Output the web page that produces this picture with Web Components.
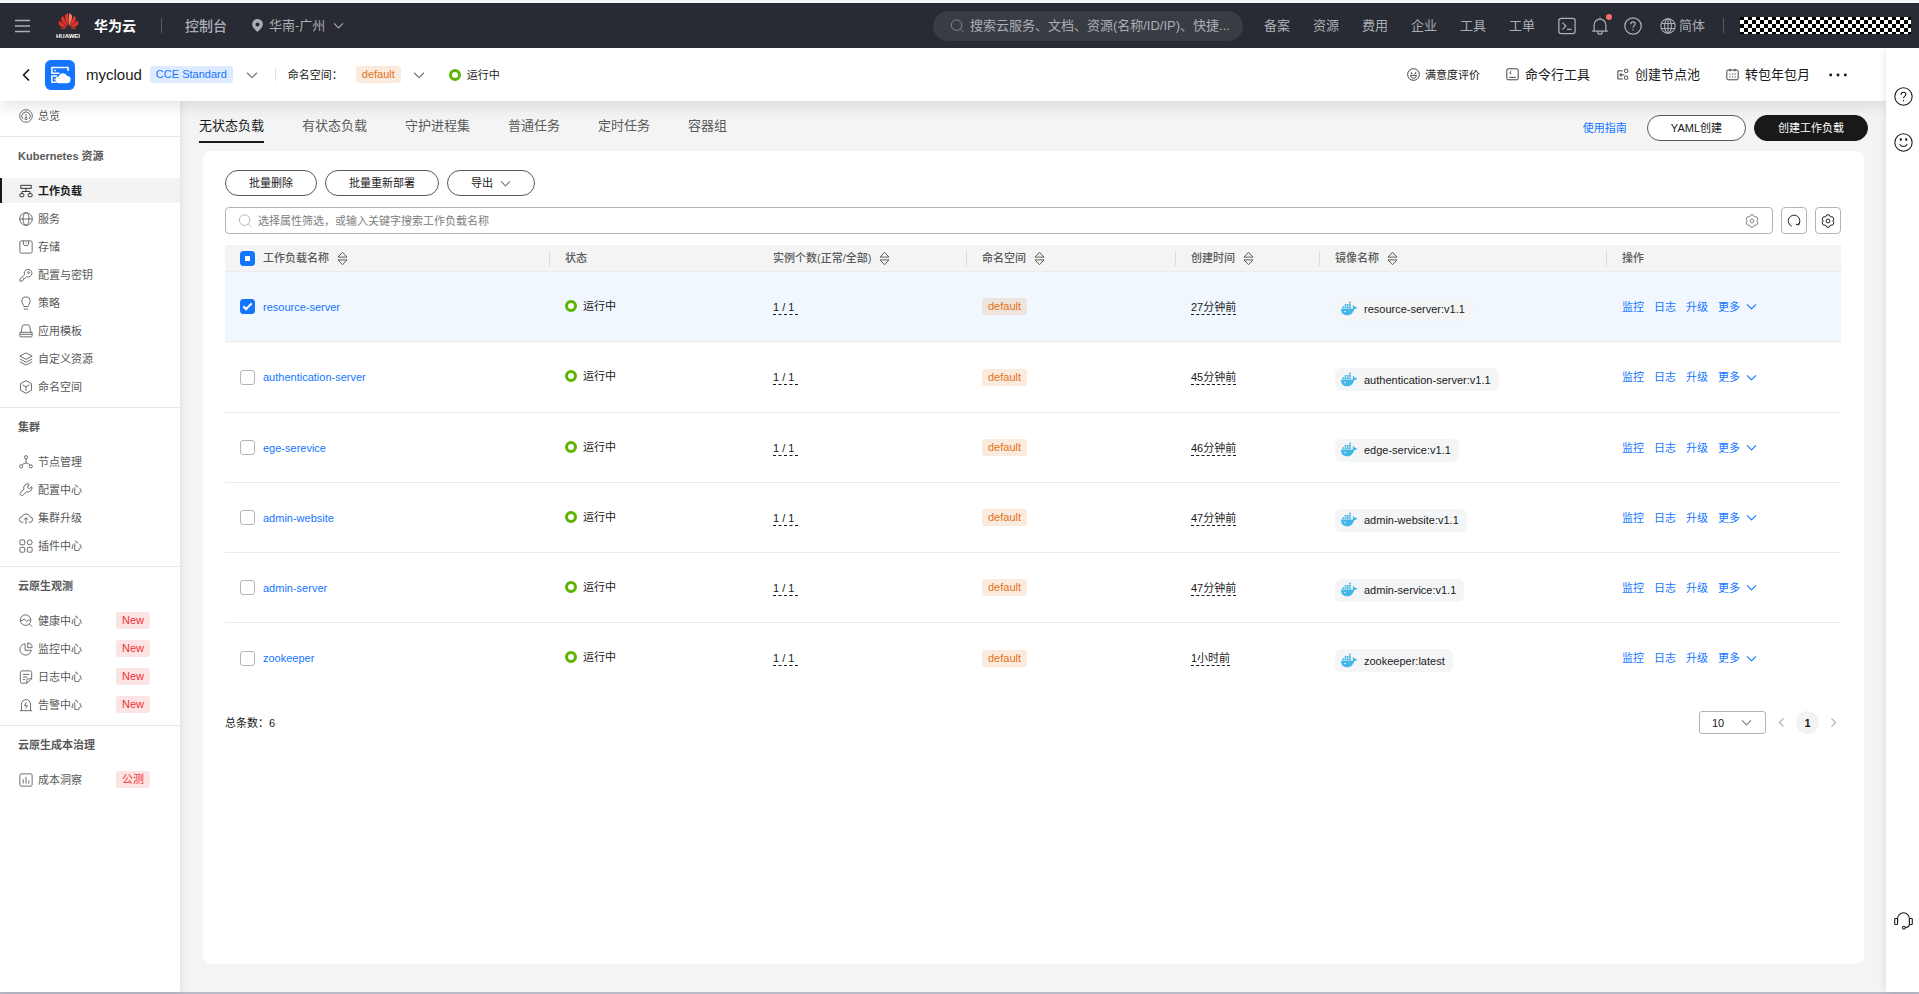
<!DOCTYPE html>
<html lang="zh-CN">
<head>
<meta charset="utf-8">
<title>工作负载 - 云容器引擎</title>
<style>
  body {
    margin: 0;
    font-family: "Liberation Sans", "Noto Sans CJK SC", sans-serif;
    font-size: 11px;
    line-height: 16px;
    color: #191919;
  }
</style>
</head>
<body>
<cloud-console></cloud-console>

<script>
// every glyph is drawn on a 16x16 grid, stroke follows the text colour
const icons = {
  menu: '<path d="M1 2.5h15M1 8h15M1 13.5h15" stroke-width="1.5"/>',
  down: '<path d="m1.500 5 6.500 6.500L14.500 5" stroke-width="1.600"/>',
  back: '<path d="M11 2.500 5.500 8l5.500 5.500" stroke-width="1.700"/>',
  left: '<path d="m11 2-6 6 6 6" stroke-width="1.800"/>',
  right: '<path d="m5 2 6 6-6 6" stroke-width="1.800"/>',
  pin: '<path fill="currentColor" stroke="none" fill-rule="evenodd" d="M8 0a6.6 6.6 0 0 0-6.6 6.6C1.400 10.500 6 14 8 16c2-2 6.600-5.500 6.600-9.400A6.600 6.600 0 0 0 8 0zm0 4.200a2.500 2.500 0 1 1 0 5 2.500 2.500 0 0 1 0-5z"/>',
  search: '<circle cx="7.500" cy="7" r="6"/><path d="m12 11.500 3 3"/>',
  terminal: '<rect x=".8" y="1.300" width="14.400" height="13.400" rx="2"/><path d="m4 5 3 3-3 3M8 11h4"/>',
  bell: '<path d="M1 12.500h14M2.800 12.500V7a5.200 5.200 0 0 1 10.400 0v5.500M6 13c0 1.500.8 2.300 2 2.300s2-.8 2-2.300M8 .5v1.300"/>',
  help: '<circle cx="8" cy="8" r="7.300"/><path d="M6 6.500c0-1.300.9-2.100 2-2.100s2 .8 2 1.900c0 1.300-2 1.500-2 3.200M8 10.900v1.100"/>',
  globe: '<circle cx="8" cy="8" r="7.200"/><ellipse cx="8" cy="8" rx="3.400" ry="7.200"/><path d="M.8 8h14.400"/>',
  globeGrid: '<circle cx="8" cy="8" r="7.200"/><ellipse cx="8" cy="8" rx="3.400" ry="7.200"/><path d="M8 .8v14.400M1.400 5.500h13.200M1.400 10.500h13.200"/>',
  laugh: '<circle cx="8" cy="8" r="7.200"/><path d="M4.500 9h7c0 2.200-1.500 3.500-3.500 3.500S4.500 11.200 4.500 9zM4.500 6.500h2M9.500 6.500h2M5.500 5.500v1M10.500 5.500v1"/>',
  smile: '<circle cx="8" cy="8" r="7.300"/><path d="M4.800 9.500c.8 1.300 1.800 1.900 3.200 1.900s2.400-.6 3.200-1.900"/><path d="M5.700 4.500v2M10.300 4.500v2" stroke-width="1.600"/>',
  shell: '<rect x="1" y="1" width="14" height="13.500" rx="1.500"/><path d="M6.500 4 4.500 5.800l2 1.800M4 11.500h8"/>',
  pool: '<path d="M8.500 3.500H2.300v10h6.200M4 8.500h4.500M6.200 6.300v4.400M8.500 8.500h2"/><rect x="10.500" y="1.500" width="4" height="4" rx="1.300"/><rect x="10.500" y="10" width="4" height="4" rx="1.300"/>',
  calendar: '<rect x="1" y="2.500" width="14" height="12" rx="1.500"/><path d="M5 1v3M11 1v3M4 7.500h1.500M7.300 7.500h1.500M10.600 7.500h1.500M4 11h1.500M7.300 11h1.500M10.600 11h1.500"/>',
  more: '<g fill="currentColor" stroke="none"><circle cx="1.500" cy="8" r="1.300"/><circle cx="8" cy="8" r="1.300"/><circle cx="14.500" cy="8" r="1.300"/></g>',
  headset: '<path d="M3 9V6.500a5 5 0 0 1 10 0V11c0 1.600-1 2.800-3.500 3"/><rect x=".6" y="6.300" width="2.400" height="5" rx=".6"/><rect x="13" y="6.300" width="2.400" height="5" rx=".6"/><circle cx="8.300" cy="14" r="1.200"/>',
  overview: '<circle cx="8" cy="8" r="7.200"/><path d="M4.500 11.500a4.800 4.800 0 1 1 7 0M8 6v4"/><circle cx="8" cy="11" r="1.300"/>',
  workload: '<rect x="2" y="1.500" width="12" height="3.500"/><path d="M8 5v3.500M3.500 11V8.500h9V11"/><rect x="1" y="11" width="4.500" height="3.500" rx="1"/><rect x="10.500" y="11" width="4.500" height="3.500" rx="1"/>',
  storage: '<rect x="1" y="1" width="14" height="14" rx="1.800"/><path d="M5 1v3.500c0 1.200 1 1.900 3 1.900s3-.7 3-1.900V1M8 3v1"/>',
  key: '<path d="M6.400 7.800a4.400 4.400 0 1 1 2.300 2.200L6.500 12H5v1.500L3.800 15H1v-2.200z"/><circle cx="11" cy="5.200" r="1"/>',
  bulb: '<path d="M5.500 12c0-2-2.200-3-2.200-6.200a4.700 4.700 0 0 1 9.400 0C12.700 9 10.500 10 10.500 12zM5.500 15h5"/>',
  template: '<path d="M2.500 9.500 3.800 2.500C4 1.500 4.600 1 5.500 1h5c.9 0 1.500.5 1.700 1.500l1.300 7"/><path d="M1 9.500h14v2.300H1zM1 11.800v1.700c0 .7.400 1.200 1.200 1.200h11.600c.8 0 1.200-.5 1.200-1.200v-1.700"/>',
  layers: '<path d="m8 1 7 3.700-7 3.700-7-3.700zM1 8l7 3.700L15 8M1 11.200l7 3.700 7-3.700"/>',
  cube: '<path d="m8 .8 6.300 3.400v7.600L8 15.200l-6.300-3.400V4.200zM4 5.500l4 2.300 4-2.300M8 7.800v4.500"/>',
  nodes: '<circle cx="8" cy="2.500" r="1.800"/><circle cx="2.500" cy="13" r="1.800"/><circle cx="13.500" cy="13" r="1.800"/><path d="M8 4.300v5M8 9.300c-2 0-3.500.7-4.300 2.300M8 9.300c2 0 3.500.7 4.300 2.300"/>',
  wrench: '<path d="M11.500 1.200A4.600 4.600 0 0 0 5.600 7L1.600 11.400c-1.200 1.600.9 4.200 2.800 2.600L8.600 10a4.600 4.600 0 0 0 6-5.700L11.800 6.500 9.800 5z"/>',
  upload: '<path d="M5 13H3.800A3.200 3.200 0 0 1 3.500 6.600 4.700 4.700 0 0 1 12.500 6.600 3.200 3.200 0 0 1 12.200 13H11M8 15V8M5.500 10 8 7.600l2.500 2.400"/>',
  grid: '<rect x="1" y="1" width="5.500" height="5.500" rx="1"/><circle cx="12.200" cy="3.800" r="2.800"/><rect x="1" y="9.500" width="5.500" height="5.500" rx="1"/><rect x="9.500" y="9.500" width="5.500" height="5.500" rx="1"/>',
  health: '<circle cx="7.500" cy="7" r="6"/><path d="m12 11.500 3 3M2 7.500h2L6 5.500l2.500 3L10.500 7H13"/>',
  pie: '<path d="M7 2a6.500 6.500 0 1 0 7 7.500H7z"/><path d="M10 1v5.500h5A5.500 5.500 0 0 0 10 1z"/>',
  log: '<path d="M14.500 10V3c0-1.200-.7-2-2-2h-9c-1.300 0-2 .8-2 2v10c0 1.200.7 2 2 2H9zM14.500 10H10.500c-1 0-1.500.5-1.500 1.500V15M4.500 5h7M4.500 8h5M4.500 11h2.500"/>',
  alarm: '<path d="M1 14.500h14M2.800 14.500V7a5.200 5.200 0 0 1 10.400 0v7.500M8.500 5 6.300 8.800h3.400L7.500 12"/>',
  chart: '<rect x="1" y="1" width="14" height="14" rx="1.800"/><path d="M4.800 12V7M8 12V4.500M11.200 12V8.500"/>',
  sort: '<path d="M2.500 6.300 8 .3l5.500 6zM2.500 9.700h11L8 15.700z"/>',
  gear: '<path d="M6.600 1h2.800l1.350 2.240h2.530l1.470 2.560L13.500 8l1.250 2.200-1.470 2.550h-2.530L9.400 15H6.600l-1.350-2.250H2.720L1.250 10.200 2.500 8 1.250 5.800l1.470-2.560h2.530z"/><circle cx="8" cy="8" r="2.200"/>',
  refresh: '<path d="M5.500 14A6.600 6.600 0 1 1 13 12.300M14.300 9.200l-.8 3.400-3.300-.8"/>',
  docker: '<g fill="#42b6e6" stroke="none"><path d="M0 7.500h11.800c.4-.9.300-1.800-.2-2.700l.8-.9c.8.500 1.200 1.200 1.300 2 .8-.1 1.700 0 2.300.5-.5 1-1.500 1.500-2.800 1.500C12.200 12 9.600 14.300 6 14.300 2 14.300 0 12 0 7.500z"/><path d="M1.500 5.200h1.700v1.700H1.500zM3.700 5.200h1.700v1.700H3.700zM5.900 5.200h1.700v1.700H5.900zM8.100 5.200h1.700v1.700H8.100zM3.700 3h1.700v1.700H3.700zM5.900 3h1.700v1.700H5.900zM8.100 3h1.700v1.700H8.100zM8.100.8h1.700v1.700H8.100z"/></g><circle cx="4" cy="10.500" r=".7" fill="#fff" stroke="none"/>',
  cluster: '<g fill="none" stroke="#fff" stroke-width="1.200"><path d="M14.500 4.800V2H1.500v4.600h6M3.500 4.300h1.200M5.500 8.800h-4v5h3.300"/><path d="M3.500 11.300h.8"/></g><path fill="#fff" stroke="none" d="M7.200 14.500a2.700 2.700 0 0 1-.3-5.400 3.700 3.700 0 0 1 6.800-.4 2.900 2.900 0 0 1-.3 5.800z"/>',
  huawei: '<g stroke="none" fill="#e5332a"><path d="M7.600 10.600C6.200 7.400 4.600 4.500 5.200 2.200 5.600.9 6.700.3 7.500.2c.5 3.200.5 7 .1 10.400z"/><path d="M8.400 10.600C9.800 7.400 11.400 4.500 10.800 2.200 10.400.9 9.300.3 8.500.2c-.5 3.200-.5 7-.1 10.400z" fill="#f08060"/><path d="M7 10.900C4.700 9 2.400 7.300 2.100 5.200c-.2-1.400.6-2.400 1.500-2.900C4.900 4.700 6.300 7.900 7 10.900z"/><path d="M9 10.900c2.300-1.900 4.600-3.600 4.900-5.700.2-1.400-.6-2.400-1.500-2.900C11.100 4.700 9.700 7.900 9 10.900z"/><path d="M6.500 11.500C4 11.300 1.600 11 .6 9.600-.2 8.400 0 7 .6 6.200c2.300 1.400 4.500 3.300 5.900 5.300z"/><path d="M9.500 11.500c2.500-.2 4.900-.5 5.900-1.900.8-1.200.6-2.600 0-3.400-2.300 1.400-4.500 3.300-5.900 5.300z"/><path d="M6.200 12.200c-1.800.8-3.400.9-4.700-.5 1.600-.2 3.300 0 4.700.5zM9.800 12.200c1.800.8 3.400.9 4.700-.5-1.600-.2-3.300 0-4.700.5z"/></g>',
};

function define(name, html, setup) {
  const template = document.createElement('template');
  template.innerHTML = html;
  customElements.define(name, class extends HTMLElement {
    constructor() {
      super();
      this.attachShadow({ mode: 'open' });
    }
    connectedCallback() {
      if (this.shadowRoot.childNodes.length) return;
      this.shadowRoot.appendChild(document.importNode(template.content, true));
      if (setup) setup(this, this.shadowRoot);
    }
  });
}

//////////////////////// small parts

define('cc-icon', `
<style>
  :host { display: inline-block; flex: none; width: 14px; height: 14px; }
  svg { display: block; width: 100%; height: 100%; overflow: visible; stroke-width: var(--icon-stroke, 1.1); stroke-linejoin: round; }
</style>
<svg viewBox="0 0 16 16" fill="none" stroke="currentColor" aria-hidden="true"></svg>`,
(host, root) => {
  root.querySelector('svg').innerHTML = icons[host.getAttribute('name')] || '';
});

define('cc-tag', `
<style>
  :host { display: inline-block; padding: 0 6px; border-radius: 3px; line-height: 17px; color: #e37318; background: rgba(227, 115, 24, .14); }
  :host([kind=blue]) { color: #1476ff; background: #deebff; }
  :host([kind=red]) { color: #f23030; background: #fde4e4; }
</style>
<slot></slot>`);

define('cc-status', `
<style>
  :host { display: inline-flex; align-items: center; gap: 6px; }
  i { box-sizing: border-box; width: 12px; height: 12px; border: 3px solid #5cb300; border-radius: 50%; background: #fff; }
</style>
<i></i><slot></slot>`);

define('cc-button', `
<style>
  :host { display: inline-block; }
  button {
    display: flex; align-items: center; justify-content: center; gap: 7px;
    height: 26px; padding: 0 23px; border: 1px solid #595959; border-radius: 13px;
    background: #fff; color: #191919; font: inherit; cursor: pointer;
  }
  :host([primary]) button { background: #191919; border-color: #191919; color: #fff; }
</style>
<button type="button"><slot></slot></button>`);

//////////////////////// top bar

define('top-bar', `
<style>
  :host {
    display: flex; align-items: center; height: 45px; padding: 0 8px 0 14px;
    background: #282b33; color: #abaeb5; font-size: 13px; line-height: 20px;
  }
  a { color: inherit; text-decoration: none; white-space: nowrap; }
  button { display: flex; padding: 0; border: 0; background: none; color: inherit; cursor: pointer; }
  .menu cc-icon { width: 16px; height: 16px; }
  .logo { display: flex; flex-direction: column; align-items: center; margin-left: 26px; width: 24px; color: #fff; }
  .logo cc-icon { width: 23px; height: 20px; }
  .logo span { font-size: 6px; line-height: 6px; font-weight: bold; }
  .brand { margin-left: 14px; color: #fff; font-size: 14px; font-weight: bold; }
  .line { width: 1px; height: 15px; background: #575a62; }
  .brand + .line { margin-left: 25px; }
  .console { margin: 0 24px 0 23px; font-size: 14px; font-weight: 500; }
  .region { gap: 5px; align-items: center; font: inherit; }
  .region cc-icon { width: 13px; height: 13px; }
  .region cc-icon:last-child { width: 11px; height: 11px; margin-left: 3px; }
  label {
    display: flex; align-items: center; gap: 6px; box-sizing: border-box; width: 310px; height: 30px;
    margin-left: auto; padding: 0 6px 0 17px; border-radius: 15px; background: #393c43;
  }
  label cc-icon { color: #85878d; }
  input { flex: 1; min-width: 0; padding: 0; border: 0; outline: 0; background: none; font: inherit; color: #fff; }
  input::placeholder { color: #abaeb5; }
  nav { display: flex; gap: 23px; margin: 0 23px 0 21px; }
  .tools { display: flex; align-items: center; gap: 15px; }
  .tools cc-icon { width: 18px; height: 18px; }
  .alert { position: relative; }
  .alert::after { content: ""; position: absolute; top: -3px; right: -3px; width: 6px; height: 6px; border-radius: 50%; background: #f66f6a; }
  .lang { display: flex; align-items: center; gap: 3px; margin: 0 18px; }
  .lang cc-icon { width: 16px; height: 16px; }
  .account { width: 171px; height: 17px; margin-left: 16px; background: repeating-conic-gradient(#fff 0 25%, #000 0 50%) 0 -1px / 8px 8px; }
</style>
<button type="button" class="menu" aria-label="菜单"><cc-icon name="menu"></cc-icon></button>
<a class="logo" href="#"><cc-icon name="huawei"></cc-icon><span>HUAWEI</span></a>
<a class="brand" href="#">华为云</a>
<span class="line"></span>
<a class="console" href="#">控制台</a>
<button type="button" class="region"><cc-icon name="pin"></cc-icon>华南-广州<cc-icon name="down"></cc-icon></button>
<label><cc-icon name="search"></cc-icon><input type="text" aria-label="搜索" placeholder="搜索云服务、文档、资源(名称/ID/IP)、快捷..."></label>
<nav>
  <a href="#">备案</a><a href="#">资源</a><a href="#">费用</a><a href="#">企业</a><a href="#">工具</a><a href="#">工单</a>
</nav>
<div class="tools">
  <button type="button" aria-label="CloudShell"><cc-icon name="terminal"></cc-icon></button>
  <button type="button" class="alert" aria-label="消息"><cc-icon name="bell"></cc-icon></button>
  <button type="button" aria-label="帮助"><cc-icon name="help"></cc-icon></button>
</div>
<a class="lang" href="#"><cc-icon name="globeGrid"></cc-icon>简体</a>
<span class="line"></span>
<div class="account"></div>`);

//////////////////////// cluster bar

define('cluster-bar', `
<style>
  :host {
    display: flex; align-items: center; height: 53px; padding: 0 39px 0 18px;
    position: relative; z-index: 2; background: #fff; box-shadow: 0 4px 16px rgba(0, 0, 0, .12);
  }
  button { display: flex; align-items: center; padding: 0; border: 0; background: none; color: #191919; font: inherit; white-space: nowrap; cursor: pointer; }
  .back cc-icon { width: 16px; height: 16px; }
  .drop { color: #777; }
  .drop cc-icon { width: 12px; height: 12px; }
  .app { display: flex; align-items: center; justify-content: center; width: 30px; height: 30px; margin: 0 11px; border-radius: 6px; background: #1476ff; }
  .app cc-icon { width: 20px; height: 20px; }
  h1 { margin: 0 8px 0 0; font-size: 15px; line-height: 20px; font-weight: normal; }
  .version { margin-right: 13px; }
  .line { width: 1px; height: 13px; margin: 0 12px 0 17px; background: #dfdfdf; }
  .space { margin: 0 12px 0 13px; }
  cc-status { margin-left: 24px; }
  .links { display: flex; align-items: center; gap: 26px; margin-left: auto; --icon-stroke: 1; }
  .links button { gap: 6px; font-size: 13px; line-height: 20px; }
  .links cc-icon { width: 13px; height: 13px; }
  .links .rate { gap: 5px; font-size: 11px; }
  .links .dots { margin-left: -7px; }
  .dots cc-icon { width: 18px; height: 18px; }
</style>
<button type="button" class="back" aria-label="返回"><cc-icon name="back"></cc-icon></button>
<span class="app"><cc-icon name="cluster"></cc-icon></span>
<h1>mycloud</h1>
<cc-tag kind="blue" class="version">CCE Standard</cc-tag>
<button type="button" class="drop" aria-label="切换集群"><cc-icon name="down"></cc-icon></button>
<span class="line"></span>
<span>命名空间：</span>
<cc-tag class="space">default</cc-tag>
<button type="button" class="drop" aria-label="切换命名空间"><cc-icon name="down"></cc-icon></button>
<cc-status>运行中</cc-status>
<div class="links">
  <button type="button" class="rate"><cc-icon name="laugh"></cc-icon>满意度评价</button>
  <button type="button"><cc-icon name="shell"></cc-icon>命令行工具</button>
  <button type="button"><cc-icon name="pool"></cc-icon>创建节点池</button>
  <button type="button"><cc-icon name="calendar"></cc-icon>转包年包月</button>
  <button type="button" class="dots" aria-label="更多"><cc-icon name="more"></cc-icon></button>
</div>`);

//////////////////////// side navigation

define('nav-item', `
<style>
  :host { display: block; }
  a { display: flex; align-items: center; height: 25px; padding-left: 19px; color: #595959; text-decoration: none; }
  .text { width: 78px; margin-left: 5px; }
  :host([active]) a { padding-left: 17px; border-left: 2px solid #191919; background: #f3f3f3; color: #191919; font-weight: bold; }
</style>
<a href="#"><cc-icon></cc-icon><span class="text"><slot></slot></span><slot name="tag"></slot></a>`,
(host, root) => {
  const icon = document.createElement('cc-icon');
  icon.setAttribute('name', host.getAttribute('icon'));
  root.querySelector('cc-icon').replaceWith(icon);
});

define('nav-group', `
<style>
  :host { display: block; padding-bottom: 8px; border-bottom: 1px solid #e6e6e6; }
  :host(:last-child) { border-bottom: 0; }
  h2 { margin: 0; padding: 11px 0 13px 18px; font-size: 11px; line-height: 17px; color: #595959; }
  .items { display: flex; flex-direction: column; gap: 3px; }
  :host(:not([heading])) h2 { display: none; }
  :host(:not([heading])) { padding-top: 2px; }
</style>
<h2></h2>
<div class="items"><slot></slot></div>`,
(host, root) => {
  root.querySelector('h2').textContent = host.getAttribute('heading') || '';
});

define('side-nav', `
<style>
  :host { display: block; width: 180px; flex: none; background: #fff; box-shadow: 0 0 8px rgba(0, 0, 0, .12); --icon-stroke: 1; }
</style>
<nav>
  <nav-group><nav-item icon="overview">总览</nav-item></nav-group>
  <nav-group heading="Kubernetes 资源">
    <nav-item icon="workload" active>工作负载</nav-item>
    <nav-item icon="globe">服务</nav-item>
    <nav-item icon="storage">存储</nav-item>
    <nav-item icon="key">配置与密钥</nav-item>
    <nav-item icon="bulb">策略</nav-item>
    <nav-item icon="template">应用模板</nav-item>
    <nav-item icon="layers">自定义资源</nav-item>
    <nav-item icon="cube">命名空间</nav-item>
  </nav-group>
  <nav-group heading="集群">
    <nav-item icon="nodes">节点管理</nav-item>
    <nav-item icon="wrench">配置中心</nav-item>
    <nav-item icon="upload">集群升级</nav-item>
    <nav-item icon="grid">插件中心</nav-item>
  </nav-group>
  <nav-group heading="云原生观测">
    <nav-item icon="health">健康中心<cc-tag slot="tag" kind="red">New</cc-tag></nav-item>
    <nav-item icon="pie">监控中心<cc-tag slot="tag" kind="red">New</cc-tag></nav-item>
    <nav-item icon="log">日志中心<cc-tag slot="tag" kind="red">New</cc-tag></nav-item>
    <nav-item icon="alarm">告警中心<cc-tag slot="tag" kind="red">New</cc-tag></nav-item>
  </nav-group>
  <nav-group heading="云原生成本治理">
    <nav-item icon="chart">成本洞察<cc-tag slot="tag" kind="red">公测</cc-tag></nav-item>
  </nav-group>
</nav>`);

//////////////////////// tabs

define('page-tabs', `
<style>
  :host { display: flex; align-items: center; padding: 0 18px 0 19px; margin-bottom: 8px; }
  nav { display: flex; gap: 38px; }
  nav a { padding: 15px 0 5px; border-bottom: 2px solid transparent; color: #595959; font-size: 13px; line-height: 20px; text-decoration: none; }
  nav a[aria-current] { border-color: #191919; color: #191919; }
  .actions { display: flex; align-items: center; gap: 8px; margin: 12px 0 0 auto; }
  .guide { margin-right: 12px; color: #1476ff; text-decoration: none; }
</style>
<nav>
  <a href="#" aria-current="page">无状态负载</a><a href="#">有状态负载</a><a href="#">守护进程集</a>
  <a href="#">普通任务</a><a href="#">定时任务</a><a href="#">容器组</a>
</nav>
<div class="actions">
  <a class="guide" href="#">使用指南</a>
  <cc-button>YAML创建</cc-button>
  <cc-button primary>创建工作负载</cc-button>
</div>`);

//////////////////////// workload table

const workloads = [
  { name: 'resource-server', age: '27分钟前', image: 'resource-server:v1.1', checked: true },
  { name: 'authentication-server', age: '45分钟前', image: 'authentication-server:v1.1' },
  { name: 'ege-serevice', age: '46分钟前', image: 'edge-service:v1.1' },
  { name: 'admin-website', age: '47分钟前', image: 'admin-website:v1.1' },
  { name: 'admin-server', age: '47分钟前', image: 'admin-service:v1.1' },
  { name: 'zookeeper', age: '1小时前', image: 'zookeeper:latest' },
];

define('workload-table', `
<style>
  :host { display: block; }
  table { width: 100%; table-layout: fixed; border-collapse: separate; border-spacing: 0; }
  th, td { padding: 0 0 0 16px; text-align: left; border-bottom: 1px solid #ebebeb; }
  th { height: 26px; background: #f4f4f4; color: #595959; font-weight: 500; }
  td { height: 69px; }
  tr:nth-child(4n+2) td { height: 70px; }
  tr:last-child td { border-bottom: 0; }
  tr.on td { background: #f0f7ff; }
  .cell { display: flex; align-items: center; gap: 7px; }
  th cc-icon { width: 13px; height: 13px; --icon-stroke: 1.2; }
  th.line { background: linear-gradient(#dbdbdb, #dbdbdb) 0 50% / 1px 15px no-repeat #f4f4f4; }
  input {
    appearance: none; flex: none; display: grid; place-items: center; width: 15px; height: 15px;
    margin: 0; border: 1px solid #b5b5b5; border-radius: 3px; background: #fff;
  }
  th:first-child, td:first-child { padding-left: 15px; }
  th:first-child input, td:first-child input { margin-right: 1px; }
  input:checked, input:indeterminate { border-color: #1476ff; background: #1476ff; }
  input:checked::before { content: ""; width: 7px; height: 3px; margin-bottom: 3px; border: solid #fff; border-width: 0 0 2px 2px; transform: rotate(-45deg); }
  input:indeterminate::before { content: ""; width: 5px; height: 5px; background: #fff; }
  a { color: #1476ff; text-decoration: none; }
  .dash { display: inline-block; border-bottom: 1px dashed #191919; line-height: 13px; }
  .count { padding-right: 4px; }
  .image { display: inline-flex; align-items: center; gap: 7px; height: 23px; margin-top: 6px; padding: 0 8px 0 6px; border-radius: 6px; background: #f4f5f7; }
  .image cc-icon { width: 16px; height: 16px; }
  .ops { display: flex; align-items: center; gap: 10px; }
  .ops a:last-child { display: flex; align-items: center; gap: 6px; }
  .ops cc-icon { width: 11px; height: 11px; }
</style>
<table>
  <colgroup><col><col><col><col><col><col><col></colgroup>
  <thead>
    <tr>
      <th><span class="cell"><input type="checkbox" id="all" aria-label="全选">工作负载名称<cc-icon name="sort"></cc-icon></span></th>
      <th class="line">状态</th>
      <th><span class="cell">实例个数(正常/全部)<cc-icon name="sort"></cc-icon></span></th>
      <th class="line"><span class="cell">命名空间<cc-icon name="sort"></cc-icon></span></th>
      <th class="line"><span class="cell">创建时间<cc-icon name="sort"></cc-icon></span></th>
      <th class="line"><span class="cell">镜像名称<cc-icon name="sort"></cc-icon></span></th>
      <th class="line">操作</th>
    </tr>
  </thead>
  <tbody></tbody>
</table>`,
(host, root) => {
  // column weights, shared out over the full table width
  const widths = [324, 208, 209, 209, 144, 287, 235];
  const total = widths.reduce((sum, w) => sum + w, 0);
  root.querySelectorAll('col').forEach((col, i) => { col.style.width = widths[i] / total * 100 + '%'; });
  root.querySelector('#all').indeterminate = true;
  root.querySelector('tbody').innerHTML = workloads.map(w => `
    <tr class="${w.checked ? 'on' : ''}">
      <td><span class="cell"><input type="checkbox" aria-label="${w.name}" ${w.checked ? 'checked' : ''}><a href="#">${w.name}</a></span></td>
      <td><cc-status>运行中</cc-status></td>
      <td><span class="dash count">1 / 1</span></td>
      <td><cc-tag>default</cc-tag></td>
      <td><span class="dash">${w.age}</span></td>
      <td><span class="image"><cc-icon name="docker"></cc-icon>${w.image}</span></td>
      <td><span class="ops"><a href="#">监控</a><a href="#">日志</a><a href="#">升级</a><a href="#">更多<cc-icon name="down"></cc-icon></a></span></td>
    </tr>`).join('');
});

define('table-pager', `
<style>
  :host { display: flex; align-items: center; margin-top: 18px; }
  .pick { display: grid; align-items: center; margin: 0 8px 0 auto; }
  .pick > * { grid-area: 1 / 1; }
  select { appearance: none; width: 67px; height: 23px; padding: 0 12px; border: 1px solid #b5b5b5; border-radius: 3px; background: #fff; font: inherit; color: #191919; }
  .pick cc-icon { justify-self: end; margin-right: 14px; width: 11px; height: 11px; color: #777; pointer-events: none; }
  button { display: grid; place-items: center; width: 15px; height: 23px; padding: 0; border: 0; background: none; font: inherit; color: #b5b5b5; }
  button cc-icon { width: 11px; height: 11px; }
  .on { width: 23px; margin: 0 7px; border-radius: 50%; background: #f3f3f3; color: #191919; font-weight: bold; }
</style>
<span>总条数：6</span>
<span class="pick">
  <select aria-label="每页条数"><option>10</option><option>20</option><option>50</option></select>
  <cc-icon name="down"></cc-icon>
</span>
<button type="button" aria-label="上一页"><cc-icon name="left"></cc-icon></button>
<button type="button" class="on">1</button>
<button type="button" aria-label="下一页"><cc-icon name="right"></cc-icon></button>`);

define('workload-card', `
<style>
  :host { display: block; flex: 1; margin: 0 22px 28px 23px; padding: 19px 23px 19px 22px; border-radius: 8px; background: #fff; }
  .row { display: flex; gap: 8px; margin-bottom: 11px; }
  cc-button cc-icon { width: 11px; height: 11px; color: #777; }
  label { flex: 1; display: flex; align-items: center; gap: 6px; padding: 0 13px 0 12px; border: 1px solid #b5b5b5; border-radius: 4px; }
  label cc-icon { color: #b5b5b5; }
  label cc-icon:last-child { color: #808080; }
  input { flex: 1; min-width: 0; height: 25px; padding: 0; border: 0; outline: 0; background: none; font: inherit; box-sizing: border-box; }
  input::placeholder { color: #808080; }
  .row > button { display: grid; place-items: center; width: 26px; padding: 0; border: 1px solid #b5b5b5; border-radius: 4px; background: #fff; color: #191919; }
</style>
<div class="row">
  <cc-button>批量删除</cc-button>
  <cc-button>批量重新部署</cc-button>
  <cc-button>导出<cc-icon name="down"></cc-icon></cc-button>
</div>
<div class="row">
  <label><cc-icon name="search"></cc-icon><input type="text" aria-label="筛选" placeholder="选择属性筛选，或输入关键字搜索工作负载名称"><cc-icon name="gear"></cc-icon></label>
  <button type="button" aria-label="刷新"><cc-icon name="refresh"></cc-icon></button>
  <button type="button" aria-label="设置"><cc-icon name="gear"></cc-icon></button>
</div>
<workload-table></workload-table>
<table-pager></table-pager>`);

//////////////////////// right rail and page shell

define('tool-rail', `
<style>
  :host {
    display: flex; flex-direction: column; align-items: flex-end; gap: 27px; box-sizing: border-box;
    width: 33px; flex: none; padding: 39px 6px 62px; position: relative; z-index: 3;
    background: #fff; box-shadow: 0 0 8px rgba(0, 0, 0, .12); --icon-stroke: .9;
  }
  button { display: flex; padding: 0; border: 0; background: none; color: #191919; }
  button:last-child { margin-top: auto; }
  cc-icon { width: 19px; height: 19px; }
</style>
<button type="button" aria-label="帮助"><cc-icon name="help"></cc-icon></button>
<button type="button" aria-label="反馈"><cc-icon name="smile"></cc-icon></button>
<button type="button" aria-label="客服"><cc-icon name="headset"></cc-icon></button>`);

define('cloud-console', `
<style>
  :host {
    display: flex; flex-direction: column; box-sizing: border-box; min-height: 100vh;
    border-top: 3px solid #f4f5f9; border-bottom: 2px solid #b9bbc6; background: #f4f4f4;
  }
  top-bar { position: relative; z-index: 4; }
  .body, .page { flex: 1; display: flex; min-height: 0; }
  .left { flex: 1; display: flex; flex-direction: column; min-width: 0; }
  main { flex: 1; display: flex; flex-direction: column; min-width: 0; }
</style>
<top-bar></top-bar>
<div class="body">
  <div class="left">
    <cluster-bar></cluster-bar>
    <div class="page">
      <side-nav></side-nav>
      <main>
        <page-tabs></page-tabs>
        <workload-card></workload-card>
      </main>
    </div>
  </div>
  <tool-rail></tool-rail>
</div>`);
</script>
</body>
</html>
